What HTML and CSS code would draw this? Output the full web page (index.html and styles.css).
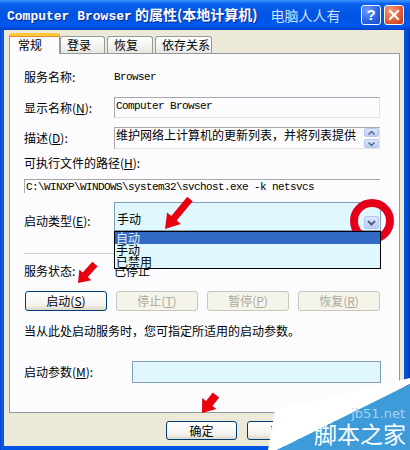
FILE: index.html
```html
<!DOCTYPE html>
<html lang="zh-CN">
<head>
    <meta charset="UTF-8">
    <title>Computer Browser 的属性(本地计算机)</title>
    <link rel="stylesheet" href="styles.css">
</head>
<body>
    <div class="window">
        <div class="titlebar">
            <span class="title"><span class="title-mono">Computer Browser</span> 的属性(本地计算机)</span>
            <span class="title-mark">电脑人人有</span>
            <div class="caption-buttons">
                <div class="cap-btn help">?</div>
                <div class="cap-btn close">
                    <svg width="12" height="12" viewBox="0 0 12 12"><path d="M2 2 L10 10 M10 2 L2 10" stroke="#fff" stroke-width="2.2" stroke-linecap="square"/></svg>
                </div>
            </div>
        </div>

        <div class="client">
            <div class="tabs">
                <div class="tab active">常规</div>
                <div class="tab t2">登录</div>
                <div class="tab t3">恢复</div>
                <div class="tab t4">依存关系</div>
            </div>

            <div class="panel">
                <div class="row r-name">
                    <div class="label">服务名称:</div>
                    <div class="mono">Browser</div>
                </div>
                <div class="row r-display">
                    <div class="label">显示名称(<u>N</u>):</div>
                    <div class="edit mono">Computer Browser</div>
                </div>
                <div class="row r-desc">
                    <div class="label">描述(<u>D</u>):</div>
                    <div class="edit desc">
                        <span>维护网络上计算机的更新列表，并将列表提供</span>
                        <div class="spin">
                            <div class="spin-btn"><svg width="7" height="4" viewBox="0 0 7 4"><path d="M0.5 3.5 L3.5 0.5 L6.5 3.5" fill="none" stroke="#4d6185" stroke-width="1.3"/></svg></div>
                            <div class="spin-btn"><svg width="7" height="4" viewBox="0 0 7 4"><path d="M0.5 0.5 L3.5 3.5 L6.5 0.5" fill="none" stroke="#4d6185" stroke-width="1.3"/></svg></div>
                        </div>
                    </div>
                </div>
                <div class="row r-path-label">
                    <div>可执行文件的路径(<u>H</u>):</div>
                </div>
                <div class="path mono">C:\WINXP\WINDOWS\system32\svchost.exe -k netsvcs</div>
                <div class="row r-combo">
                    <div class="label">启动类型(<u>E</u>):</div>
                    <div class="combo">
                        <span class="combo-text">手动</span>
                        <div class="drop-btn"><svg width="9" height="6" viewBox="0 0 9 6"><path d="M1 1 L4.5 4.5 L8 1" fill="none" stroke="#4d6185" stroke-width="2"/></svg></div>
                    </div>
                    <div class="droplist">
                        <div class="item selected">自动</div>
                        <div class="item">手动</div>
                        <div class="item">已禁用</div>
                    </div>
                </div>
                <div class="separator"></div>
                <div class="row r-status">
                    <div class="label">服务状态:</div>
                    <div>已停止</div>
                </div>
                <div class="svc-buttons">
                    <div class="btn">启动(<u>S</u>)</div>
                    <div class="btn disabled">停止(<u>T</u>)</div>
                    <div class="btn disabled">暂停(<u>P</u>)</div>
                    <div class="btn disabled">恢复(<u>R</u>)</div>
                </div>
                <div class="hint">当从此处启动服务时，您可指定所适用的启动参数。</div>
                <div class="row r-params">
                    <div class="label wide">启动参数(<u>M</u>):</div>
                    <div class="params"></div>
                </div>
            </div>

            <div class="dialog-buttons">
                <div class="btn">确定</div>
                <div class="btn">取消</div>
                <div class="btn blank"></div>
            </div>
        </div>

        <!-- annotations and watermark drawn over the screenshot -->
        <svg class="overlay" width="410" height="450" viewBox="0 0 410 450">
            <circle cx="372" cy="221" r="18" fill="none" stroke="#e4001b" stroke-width="8"/>
            <polygon fill="#e8000f" points="165,229 167.1,212.4 171.3,216 187.3,196.8 192.7,201.2 176.7,220.4 180.9,224"/>
            <polygon fill="#e8000f" points="78,283 79.3,269.4 82.7,272.5 92.4,261.7 97.6,266.3 87.9,277.1 91.3,280.2"/>
            <polygon fill="#e8000f" points="202,413 202.2,398 206.1,401.1 212.8,392.6 219.2,397.4 212.5,405.9 216.4,409"/>
            <polygon fill="#ffffff" points="268,450 275,410 410,378 410,384 277,450"/>
            <polygon fill="#3d9bd9" points="277,450 410,384 410,450"/>
            <text x="405" y="418" class="wm-url" text-anchor="end">jb51.net</text>
            <text x="406" y="443" class="wm-name" text-anchor="end">脚本之家</text>
        </svg>
    </div>
</body>
</html>
```

FILE: styles.css
```css
:root {
    --xp-blue: #0054e3;
    --xp-face: #ece9d8;
    --tab-border: #919b9c;
    --edit-border: #7f9db9;
    --cyan: #e0f7fd;
    --disabled: #aca899;
}

body {
    margin: 0;
    font-family: "Noto Sans CJK SC", "Liberation Sans", sans-serif;
    font-size: 12px;
    line-height: 14px;
    color: #000;
}

u {
    text-decoration: underline;
}

.window {
    position: relative;
    width: 410px;
    height: 450px;
    background: linear-gradient(90deg, #0841c4 0, #0a5cea 2px, #0054e3 4px, #0054e3 404px, #0049d0 408px, #00309c 410px);
    display: flex;
    flex-direction: column;
    overflow: hidden;
}

.titlebar {
    height: 30px;
    flex: none;
    display: flex;
    align-items: center;
    padding: 0 6px 0 7px;
    background: linear-gradient(#3d95ff 0%, #0a62ee 12%, #0054e3 45%, #0058ec 85%, #0040c8 100%);
    color: #fff;
}

.title {
    font-weight: 700;
    font-size: 14px;
    text-shadow: 1px 1px #0a2a8e;
    white-space: nowrap;
}

.title-mono {
    font-family: "Liberation Mono", monospace;
    font-size: 13px;
}

.title-mark {
    margin-left: 13px;
    font-size: 14px;
    color: #cfe0ff;
}

.caption-buttons {
    margin-left: auto;
    display: flex;
    gap: 3px;
}

.cap-btn {
    width: 18px;
    height: 18px;
    border: 1px solid #fff;
    border-radius: 3px;
    display: flex;
    align-items: center;
    justify-content: center;
    font-family: "Liberation Sans", sans-serif;
    font-weight: 700;
    font-size: 15px;
}

.help {
    background: radial-gradient(circle at 30% 25%, #6b9dff, #2663e0 60%, #1848c4);
}

.close {
    background: radial-gradient(circle at 30% 25%, #f59a7c, #df5a32 60%, #c23d1c);
}

.client {
    flex: 1;
    margin: 0 6px 4px 4px;
    background: var(--xp-face);
    padding: 3px 4px 0 5px;
    display: flex;
    flex-direction: column;
}

.tabs {
    height: 20px;
    display: flex;
    align-items: flex-end;
}

.tab {
    position: relative;
    height: 17px;
    box-sizing: border-box;
    border: 1px solid var(--tab-border);
    border-bottom: none;
    border-radius: 3px 3px 0 0;
    background: linear-gradient(#ffffff, #f3f3ef 60%, #e6e5de);
    padding: 1px 0 0 6px;
    line-height: 14px;
}

.tab.active {
    height: 21px;
    width: 51px;
    margin-bottom: -1px;
    z-index: 1;
    background: #fcfcfe;
    border-top: 3px solid #ffc83c;
    padding: 2px 0 0 8px;
    box-shadow: inset 0 1px 0 #e68b2c;
}

.t2 { width: 45px; }
.t3 { width: 46px; margin-left: 2px; }
.t4 { width: 57px; margin-left: 2px; }

.panel {
    height: 360px;
    box-sizing: border-box;
    border: 1px solid var(--tab-border);
    background: #fcfcfe;
    padding: 13px 19px 0 14px;
    display: flex;
    flex-direction: column;
}

.row {
    display: flex;
    align-items: center;
}

.label {
    width: 90px;
    flex: none;
}

.label.wide {
    width: 108px;
}

.mono {
    font-family: "Liberation Mono", "Noto Sans CJK SC", monospace;
    font-size: 11px;
    letter-spacing: -0.6px;
}

.r-name {
    height: 20px;
}

.edit {
    box-sizing: border-box;
    width: 266px;
    border: 1px solid;
    border-color: #a7a6aa #e4e3dc #e4e3dc #a7a6aa;
    background: #fcfcfe;
    padding: 1px 1px 0 1px;
}

.r-display {
    margin-top: 10px;
}

.r-display .edit {
    height: 21px;
}

.r-desc {
    margin-top: 9px;
}

.desc {
    height: 22px;
    display: flex;
    justify-content: space-between;
    padding: 0;
}

.desc span {
    padding-left: 1px;
}

.spin {
    width: 15px;
    display: flex;
    flex-direction: column;
    gap: 2px;
}

.spin-btn {
    height: 9px;
    background: linear-gradient(#dbe6fd, #bccdf4);
    border: 1px solid #b7c6ee;
    border-radius: 2px;
    box-sizing: border-box;
    display: flex;
    align-items: center;
    justify-content: center;
}

.r-path-label {
    margin-top: 6px;
    height: 16px;
}

.path {
    margin-top: 8px;
    height: 14px;
    box-sizing: border-box;
    border-top: 1px solid #a7a6aa;
    border-left: 1px solid #a7a6aa;
    padding: 1px 0 0 1px;
    line-height: 13px;
}

.r-combo {
    position: relative;
    margin-top: 9px;
    align-items: flex-end;
}

.r-combo .label {
    margin-bottom: 3px;
}

.combo {
    width: 267px;
    height: 29px;
    flex: none;
    box-sizing: border-box;
    border: 1px solid var(--edit-border);
    background: var(--cyan);
    display: flex;
    justify-content: space-between;
    align-items: flex-end;
    padding: 0 1px 1px 2px;
}

.combo-text {
    margin-bottom: 3px;
}

.drop-btn {
    width: 15px;
    height: 13px;
    box-sizing: border-box;
    border: 1px solid #b3c4ee;
    border-radius: 2px;
    background: linear-gradient(#dce6fe, #bccef6);
    display: flex;
    align-items: center;
    justify-content: center;
}

.droplist {
    position: absolute;
    left: 90px;
    top: 29px;
    width: 267px;
    box-sizing: border-box;
    border: 1px solid #000;
    background: var(--cyan);
    z-index: 2;
}

.item {
    height: 12px;
    line-height: 12px;
    padding-left: 1px;
    font-size: 12px;
}

.item.selected {
    background: #316ac5;
    color: #e9eefa;
}

.separator {
    margin-top: 22px;
    height: 1px;
    background: #d0d0bf;
    border-bottom: 1px solid #fff;
}

.r-status {
    margin-top: 8px;
    height: 16px;
}

.svc-buttons {
    margin: 12px 0 0 1px;
    display: flex;
    justify-content: space-between;
}

.btn {
    width: 82px;
    height: 20px;
    box-sizing: border-box;
    border: 1px solid #003c74;
    border-radius: 3px;
    background: linear-gradient(#ffffff, #f4f3ee 70%, #dcd8ca);
    display: flex;
    align-items: center;
    justify-content: center;
}

.btn.disabled {
    border-color: #c9c7ba;
    background: #f5f4ea;
    color: var(--disabled);
}

.hint {
    margin-top: 12px;
    height: 16px;
    line-height: 16px;
}

.r-params {
    margin-top: 22px;
}

.params {
    width: 249px;
    height: 22px;
    flex: none;
    box-sizing: border-box;
    border: 1px solid var(--edit-border);
    background: var(--cyan);
}

.dialog-buttons {
    margin-top: 8px;
    display: flex;
    justify-content: flex-end;
    gap: 10px;
    padding-right: 1px;
}

.dialog-buttons .btn {
    width: 71px;
    height: 19px;
}

.overlay {
    position: absolute;
    left: 0;
    top: 0;
    pointer-events: none;
}

.wm-url {
    font-family: "DejaVu Sans", sans-serif;
    font-size: 13px;
    fill: #a9d2f2;
}

.wm-name {
    font-family: "Noto Sans CJK SC", sans-serif;
    font-size: 23px;
    fill: #ffffff;
}
```
